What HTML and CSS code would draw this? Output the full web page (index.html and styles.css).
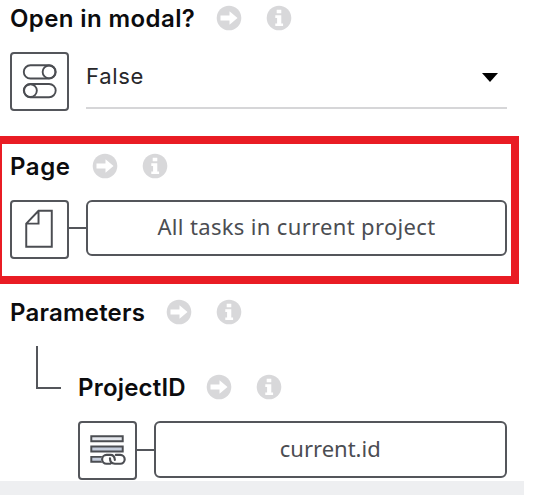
FILE: index.html
```html
<!DOCTYPE html>
<html lang="en">
<head>
<meta charset="utf-8">
<title>Action settings</title>
<link rel="stylesheet" href="styles.css">
</head>
<body>
<svg class="defs" aria-hidden="true">
  <symbol id="go" viewBox="0 0 26 26"><circle cx="13" cy="13" r="12.3" fill="#d8d8da"/><path d="M4.5 10.5h9V6.2l8 6.8-8 6.8v-4.3h-9z" fill="#fff"/></symbol>
  <symbol id="info" viewBox="0 0 26 26"><circle cx="13" cy="13" r="12.3" fill="#d8d8da"/><path d="M10.7 4.7h4.6v3.6h-4.6zM9.3 10.3h6v8.2h1.8v2.6H9.3v-2.6h1.8v-5.600H9.3z" fill="#fff"/></symbol>
</svg>
<main class="panel">
  <section class="modal">
    <header class="heading"><h2 class="label open">Open in modal?</h2><svg class="hint"><use href="#go"/></svg><svg class="hint"><use href="#info"/></svg></header>
    <div class="row">
      <div class="tile"><svg class="glyph" viewBox="0 0 56 56"><g fill="none" stroke="#4b4d52" stroke-width="1.9"><rect x="12" y="11.5" width="32.500" height="13.5" rx="6.75"/><circle cx="37.7" cy="18.25" r="6.5"/><rect x="12" y="30.500" width="32.500" height="13.5" rx="6.75"/><circle cx="18.8" cy="37.25" r="6.5"/></g></svg></div>
      <div class="select"><span class="value">False</span><svg class="caret" viewBox="0 0 16 9"><path d="M0 0h16L8 9z"/></svg></div>
    </div>
  </section>
  <section class="page">
    <header class="heading"><h2 class="label pg">Page</h2><svg class="hint"><use href="#go"/></svg><svg class="hint"><use href="#info"/></svg></header>
    <div class="row">
      <div class="tile"><svg class="glyph" viewBox="0 0 56 56"><path d="M14.500 22 27 9h13.500v36.500h-26zM14.500 22H27V9" fill="none" stroke="#4b4d52" stroke-width="2"/></svg></div>
      <div class="link"></div>
      <div class="field"><span class="all">All tasks in current project</span></div>
    </div>
  </section>
  <section class="params">
    <header class="heading"><h2 class="label par">Parameters</h2><svg class="hint"><use href="#go"/></svg><svg class="hint"><use href="#info"/></svg></header>
    <div class="tree">
      <div class="branch"></div>
      <div class="child">
        <header class="heading"><h3 class="label pid">ProjectID</h3><svg class="hint"><use href="#go"/></svg><svg class="hint"><use href="#info"/></svg></header>
        <div class="row">
          <div class="tile"><svg class="glyph" viewBox="0 0 56 56"><g fill="#c5cddc" stroke="#4b4d52" stroke-width="2"><path fill="#e4e7ed" d="M11.500 13.500h32v5h-32z"/><path d="M11.500 24h32v5h-32z"/><path d="M11.500 34.500h12v5h-12z"/></g><g fill="none" stroke="#4b4d52" stroke-linecap="round"><path stroke-width="2.2" fill="#fff" stroke="#fff" d="M27 32.500h14a4.500 4.500 0 0 1 0 9H27a4.500 4.500 0 0 1 0-9"/><path stroke-width="2.200" d="M31 41.500h-4a4.500 4.500 0 0 1 0-9h4q4 0 4.500 5M30.500 36q0 5.500 5 5.500h5.500a4.500 4.500 0 0 0 0-9h-4.500"/></g></svg></div>
          <div class="link"></div>
          <div class="field tall"><span class="cur">current.id</span></div>
        </div>
      </div>
    </div>
  </section>
  <footer class="strip"></footer>
</main>
</body>
</html>
```

FILE: styles.css
```css
* { box-sizing: border-box; }
body { margin: 0; background: #fff; overflow: hidden; font-family: Inter, "Liberation Sans", sans-serif; color: #0c0c0e; }
.defs { display: none; }
.panel { width: 524px; height: 495px; display: flex; flex-direction: column; }
.modal { height: 136px; padding: 5px 17px 0 10px; }
.heading { display: flex; align-items: center; height: 27px; }
.label { margin: 0; font-size: 24px; line-height: 27px; font-weight: 600; white-space: nowrap; letter-spacing: 0.2px; }
.hint { width: 26px; height: 26px; flex: none; margin-right: 24.400px; }
.heading .hint { margin-top: -1px; }
.open { width: 205.500px; letter-spacing: 0.4px; }
.pg { width: 81.500px; letter-spacing: 0.6px; }
.par { width: 155.500px; }
.pid { width: 127.500px; }
.row { display: flex; margin-top: 20px; }
.tile { width: 59px; height: 59px; flex: none; border: 2px solid #54565b; border-radius: 4px; }
.glyph { display: block; width: 55px; height: 55px; }
.select { flex: 1; height: 57px; margin-left: 17px; border-bottom: 2px solid #d6d6d8; display: flex; justify-content: space-between; padding: 9px 9px 0 0; }
.value { font-size: 22px; line-height: 30px; letter-spacing: 0.7px; color: #27272a; }
.caret { width: 16px; height: 9px; margin-top: 12px; }
.page { width: 519px; height: 148px; border: 8px solid #e91c24; border-left-width: 2px; padding: 9px 4px 0 8px; }
.link { width: 17px; height: 2px; margin-top: 27px; background: #54565b; flex: none; }
.field { flex: 1; height: 56px; border: 2px solid #54565b; border-radius: 6px; display: flex; justify-content: center; align-items: center; padding-bottom: 3px; font-family: "Noto Sans", sans-serif; font-size: 22px; color: #4b4d52; white-space: nowrap; }
.all { letter-spacing: 0.34px; }
.page .row { margin-top: 19.500px; }
.params { height: 197px; padding: 15px 17px 0 10px; }
.tree { display: flex; margin-top: 20px; }
.branch { width: 25px; height: 43px; margin: 0 17px 0 26px; border-left: 2px solid #54565b; border-bottom: 2px solid #54565b; flex: none; }
.child { flex: 1; padding-top: 28px; }
.child .link { width: 16.500px; margin-top: 28px; }
.tall { height: 57px; }
.strip { height: 14px; background: #eeeff1; }
```
